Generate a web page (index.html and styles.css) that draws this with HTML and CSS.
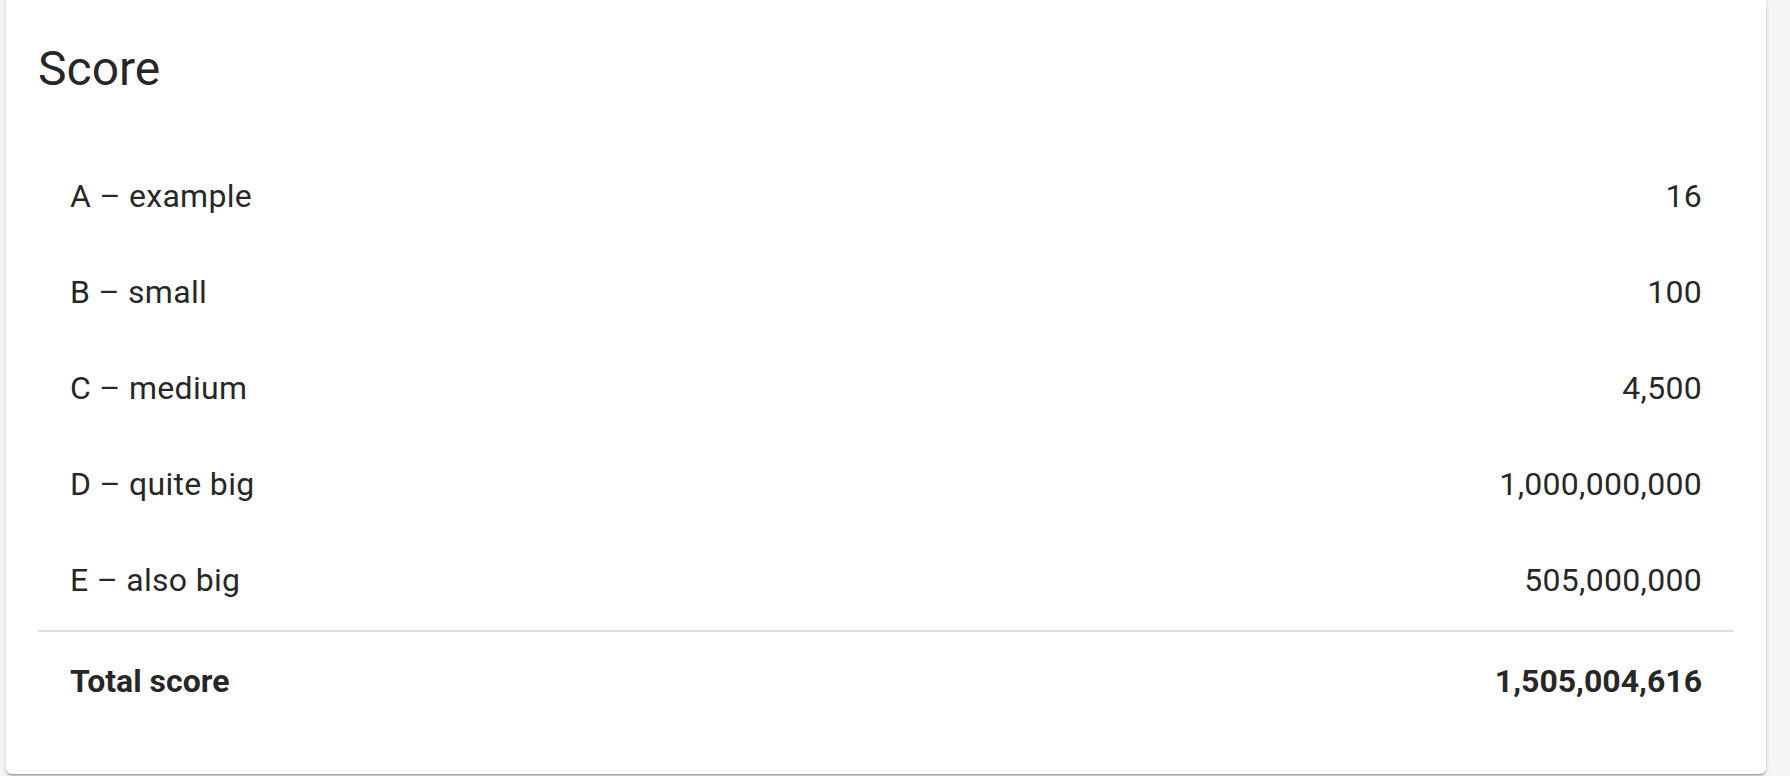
FILE: index.html
```html
<!DOCTYPE html>
<html lang="en">
<head>
<meta charset="utf-8">
<title>Score</title>
<link rel="stylesheet" href="styles.css">
</head>
<body>
<div class="card">
  <h2 class="title">Score</h2>
  <ul class="list">
    <li class="row"><span class="label">A – example</span><span class="value">16</span></li>
    <li class="row"><span class="label">B – small</span><span class="value">100</span></li>
    <li class="row"><span class="label">C – medium</span><span class="value">4,500</span></li>
    <li class="row"><span class="label">D – quite big</span><span class="value">1,000,000,000</span></li>
    <li class="row"><span class="label">E – also big</span><span class="value">505,000,000</span></li>
  </ul>
  <hr class="divider">
  <div class="row total"><span class="label">Total score</span><span class="value">1,505,004,616</span></div>
</div>
</body>
</html>
```

FILE: styles.css
```css
html, body {
  margin: 0;
  padding: 0;
  background: #f5f5f5;
  height: 100%;
  overflow: hidden;
}

body {
  font-family: Roboto, "Liberation Sans", Arial, sans-serif;
  color: rgba(0, 0, 0, 0.87);
}

.card {
  box-sizing: border-box;
  width: 1760px;
  height: 774px;
  margin-left: 6px;
  padding: 37px 32px 46px;
  background: #fff;
  border-radius: 0 0 6px 6px;
  box-shadow: 0 3px 2px -2px rgba(0, 0, 0, 0.2),
              0 2px 2px 0 rgba(0, 0, 0, 0.14),
              0 1px 5px 0 rgba(0, 0, 0, 0.12);
}

.title {
  margin: 0 0 47px;
  font-size: 48px;
  line-height: 64px;
  font-weight: 400;
  letter-spacing: 0;
}

.list {
  list-style: none;
  margin: 0;
  padding: 0;
}

.row {
  display: flex;
  justify-content: space-between;
  align-items: center;
  padding: 0 32px;
  height: 96px;
  font-size: 32px;
  line-height: 96px;
  letter-spacing: 0.3px;
}

.divider {
  border: 0;
  height: 2px;
  margin: 2px 0 1px;
  background: #e0e0e0;
}

.total {
  font-weight: 700;
  letter-spacing: 0;
}
```
